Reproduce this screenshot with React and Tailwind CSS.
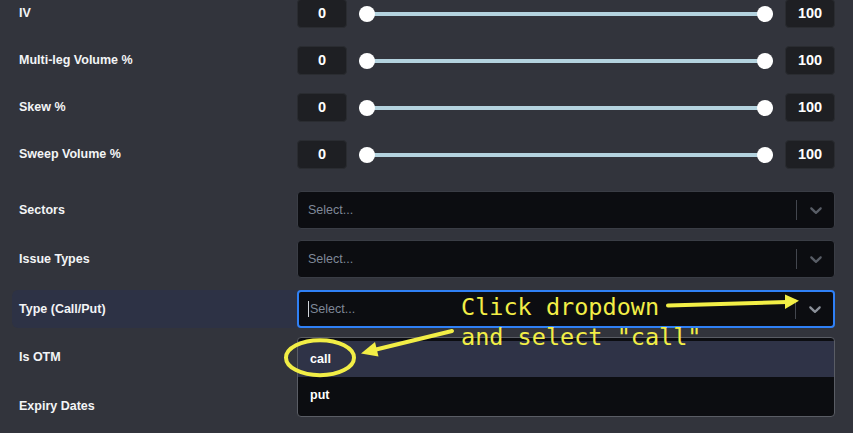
import React from "react";

const LABEL = "text-[12.5px] font-bold text-[#f3f4f6]";
const FONT = { fontFamily: '"Liberation Sans", Arial, sans-serif' };

function NumBox({ v }) {
  return (
    <div className="w-[50px] h-[29px] shrink-0 rounded-[4px] bg-[#1e1f23] border border-[#2a2c31] flex items-center justify-center text-[14.5px] font-bold text-white">
      {v}
    </div>
  );
}

function SliderRow({ label, first }) {
  return (
    <div className={`flex items-center h-[29px] pl-[7px] ${first ? "" : "mt-[18px]"}`}>
      <div className={`w-[278px] shrink-0 ${LABEL}`}>{label}</div>
      <div className="flex-1 flex items-center">
        <NumBox v="0" />
        <div className="flex-1 relative h-[16px] mx-[12px] flex items-center">
          <div className="w-full h-[4px] bg-[#b4d3df] rounded-full" />
          <div className="absolute left-0 top-0 w-[16px] h-[16px] rounded-full bg-white" />
          <div className="absolute right-0 top-0 w-[16px] h-[16px] rounded-full bg-white" />
        </div>
        <NumBox v="100" />
      </div>
    </div>
  );
}

function Chevron({ color }) {
  return (
    <svg width="20" height="20" viewBox="0 0 20 20" fill={color}>
      <path d="M4.516 7.548c0.436-0.446 1.043-0.481 1.576 0l3.908 3.747 3.908-3.747c0.533-0.481 1.141-0.446 1.574 0 0.436 0.445 0.408 1.197 0 1.615-0.406 0.418-4.695 4.502-4.695 4.502-0.217 0.223-0.502 0.335-0.787 0.335s-0.57-0.112-0.789-0.335c0 0-4.287-4.084-4.695-4.502s-0.436-1.170 0-1.615z" />
    </svg>
  );
}

function Select({ focused }) {
  return (
    <div
      className={`flex-1 h-[38px] rounded-[4px] bg-[#0c0d11] flex items-center ${
        focused ? "border-2 border-[#2f80f6] pl-[9px]" : "border border-[#3a3d45] pl-[10px]"
      }`}
    >
      {focused && <div className="w-px h-[16px] bg-[#d1d5db] mr-[1px]" />}
      <span className="flex-1 text-[12.5px] text-[#7f8898]">Select...</span>
      <div className="w-px h-[20px] bg-[#43464e]" />
      <div className="w-[37px] flex items-center justify-center">
        <Chevron color={focused ? "#8b9099" : "#585d66"} />
      </div>
    </div>
  );
}

export default function App() {
  return (
    <div className="w-[853px] h-[433px] overflow-hidden bg-[#32343c] relative" style={FONT}>
      <div className="pl-[12px] pr-[18px] flex flex-col mt-[-1px]">
        <SliderRow label="IV" first />
        <SliderRow label="Multi-leg Volume %" />
        <SliderRow label="Skew %" />
        <SliderRow label="Sweep Volume %" />

        <div className="flex items-center h-[38px] pl-[7px] mt-[22px]">
          <div className={`w-[278px] shrink-0 ${LABEL}`}>Sectors</div>
          <Select />
        </div>
        <div className="flex items-center h-[38px] pl-[7px] mt-[11px]">
          <div className={`w-[278px] shrink-0 ${LABEL}`}>Issue Types</div>
          <Select />
        </div>
        <div className="flex items-center h-[38px] mt-[12px]">
          <div className={`w-[285px] h-full shrink-0 pl-[7px] flex items-center rounded-l-[6px] bg-[#2d3245] ${LABEL}`}>
            Type (Call/Put)
          </div>
          <div className="flex-1 flex relative h-full">
            <Select focused />
            <div className="absolute left-0 right-0 top-[calc(100%+9px)] h-[80px] rounded-[4px] bg-[#0c0d11] border border-[#5a5d65] py-[3px] z-10">
              <div className="h-[36px] px-[12px] flex items-center bg-[#2f3347] text-[12.5px] font-bold text-white">call</div>
              <div className="h-[36px] px-[12px] flex items-center text-[12.5px] font-bold text-white">put</div>
            </div>
          </div>
        </div>
        <div className="flex items-center h-[38px] pl-[7px] mt-[10px]">
          <div className={`w-[278px] shrink-0 ${LABEL}`}>Is OTM</div>
        </div>
        <div className="flex items-center h-[38px] pl-[7px] mt-[11px]">
          <div className={`w-[278px] shrink-0 ${LABEL}`}>Expiry Dates</div>
        </div>
      </div>

      {/* annotation overlay */}
      <svg className="absolute inset-0 z-20 pointer-events-none" width="853" height="433" viewBox="0 0 853 433">
        <g fill="none" stroke="#f2ee46" strokeWidth="4" strokeLinecap="round">
          <line x1="668" y1="305.5" x2="787" y2="302" />
          <line x1="452" y1="331" x2="374" y2="350" />
          <ellipse cx="320" cy="357.7" rx="34" ry="17.5" />
        </g>
        <g fill="#f2ee46">
          <polygon points="785,294.5 799,300.8 785,309" />
          <polygon points="375,342 361,353.5 378.5,356.5" />
        </g>
      </svg>
      <div
        className="absolute left-[461px] top-[292px] z-30 text-[23.5px] leading-[30px] text-[#f2ee46] whitespace-pre pointer-events-none"
        style={{ fontFamily: '"DejaVu Sans Mono", monospace' }}
      >
        {'Click dropdown\nand select "call"'}
      </div>
    </div>
  );
}
